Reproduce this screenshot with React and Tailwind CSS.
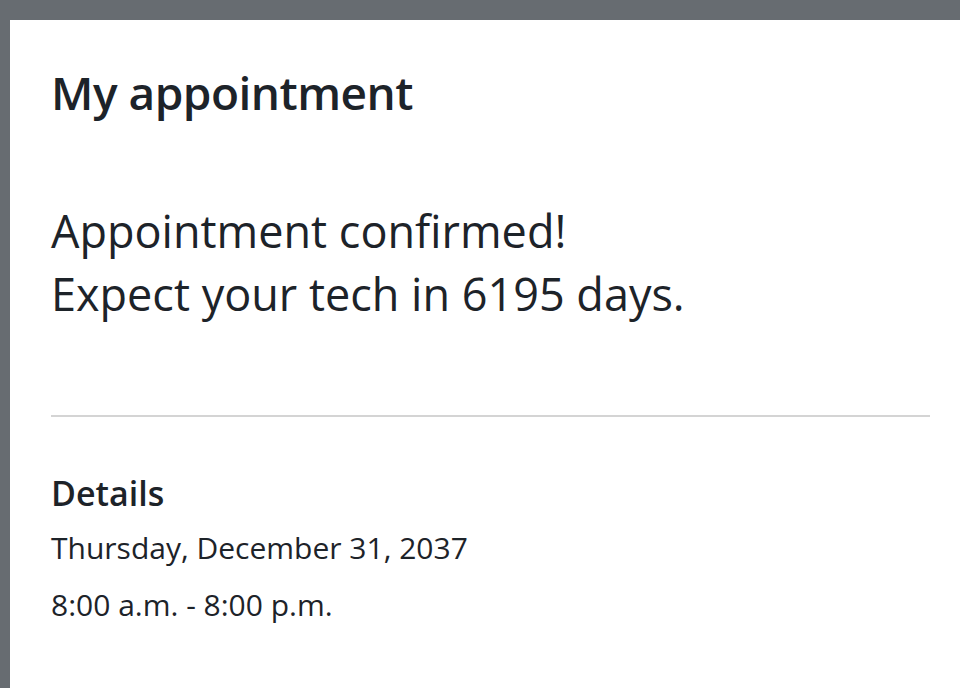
export default function App() {
  return (
    <div className="h-[688px] w-[960px] overflow-hidden bg-[#676c71] pt-[20px] pl-[10px]">
      <div className="h-full bg-white pt-[44px] pl-[41px] pr-[30px] text-[#1d2329] font-['Open_Sans',sans-serif]">
        <h1 className="text-[46px] leading-[56px] font-semibold tracking-[-0.5px]">My appointment</h1>
        <div className="mt-[79px] text-[45px] leading-[63px] tracking-[0px]">
          <p>Appointment confirmed!</p>
          <p>Expect your tech in 6195 days.</p>
        </div>
        <div className="mt-[90px] h-[2px] bg-[#d4d4d4]" />
        <h2 className="mt-[56px] text-[34px] leading-[40px] font-semibold">Details</h2>
        <div className="mt-[6px] text-[30px] leading-[57px]">
          <p>Thursday, December 31, 2037</p>
          <p>8:00 a.m. - 8:00 p.m.</p>
        </div>
      </div>
    </div>
  );
}
